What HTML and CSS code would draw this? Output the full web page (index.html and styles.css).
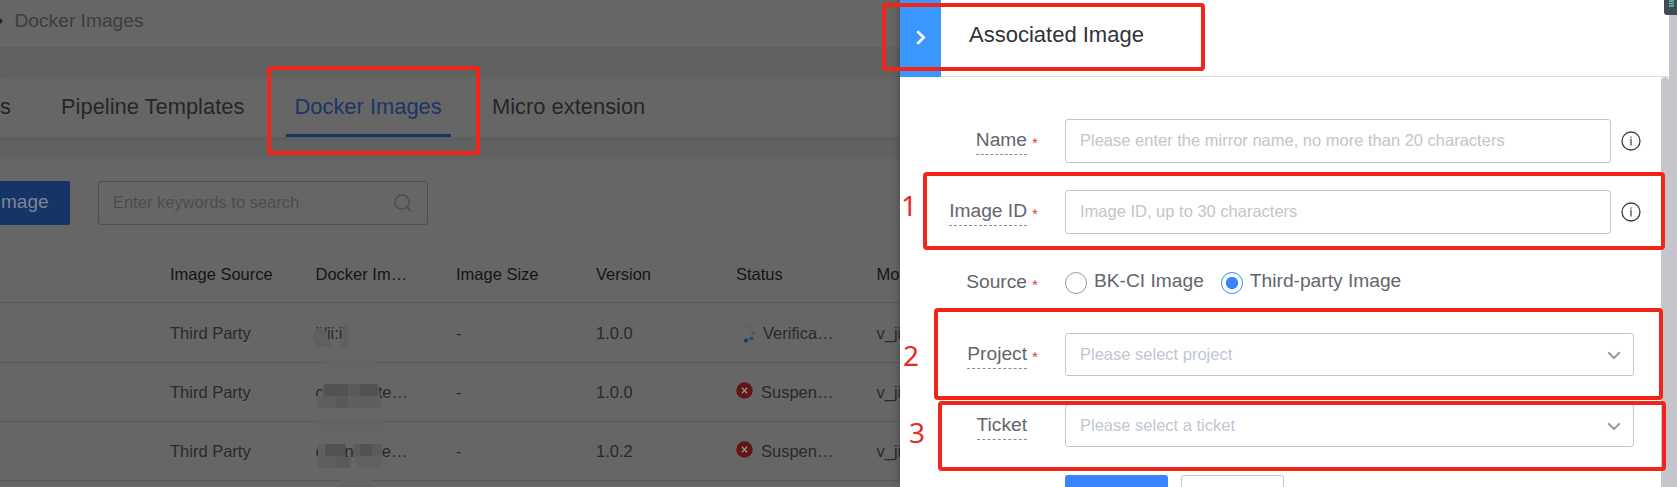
FILE: index.html
```html
<!DOCTYPE html>
<html lang="en">
<head>
<meta charset="utf-8">
<title>Docker Images</title>
<link rel="stylesheet" href="styles.css">
</head>
<body>
<svg width="0" height="0" class="defs" aria-hidden="true">
  <symbol id="info" viewBox="0 0 20 20"><circle cx="10" cy="10" r="9" fill="none" stroke="#3c3c3c" stroke-width="1.3"/><path d="M10 7.8V14.4M10 5.4V6.8" stroke="#3c3c3c" stroke-width="1.2"/></symbol>
  <symbol id="down" viewBox="0 0 14 9"><path d="M1.2 1.2L7 7L12.8 1.2" fill="none" stroke="#979ba5" stroke-width="2"/></symbol>
  <symbol id="fail" viewBox="0 0 17 17"><circle cx="8.5" cy="8.5" r="8.2" fill="#611616"/><path d="M5.9 5.7L11.1 11.3M11.1 5.7L5.9 11.3" stroke="#959090" stroke-width="1.3"/></symbol>
</svg>
<div class="app">
  <main class="page">
    <header class="crumbs"><svg class="crumb-dot" viewBox="0 0 3 6"><path d="M0 0L3 3L0 6Z" fill="#222"/></svg><span>Docker Images</span></header>
    <nav class="tabs">
      <span class="tab tab-cut">s</span>
      <span class="tab tab-pipeline">Pipeline Templates</span>
      <span class="tab tab-active">Docker Images</span>
      <span class="tab tab-micro">Micro extension</span>
    </nav>
    <section class="content">
      <div class="toolbar">
        <div class="add">mage</div>
        <div class="search"><span>Enter keywords to search</span>
          <svg viewBox="0 0 18 18"><circle cx="8" cy="8" r="7.1" fill="none" stroke="#4e4f51" stroke-width="1.5"/><path d="M13.2 13.2L17 17" stroke="#4e4f51" stroke-width="2"/></svg>
        </div>
      </div>
      <div class="table">
        <div class="row head"><i></i><span>Image Source</span><span>Docker Im…</span><span>Image Size</span><span>Version</span><span>Status</span><span>Mo</span></div>
        <div class="row"><i></i><span>Third Party</span><span class="masked">i'/ii:i'
            <svg class="mask" viewBox="0 0 80 60"><path d="M1 28L5 21L10 17L15 22L16 27L24 37H5Z" fill="#5f5f5f"/><path d="M29 37L33 15L37 13V37Z" fill="#606060"/><path d="M14 50H65V61H14Z" fill="#626564"/></svg></span><span>-</span><span>1.0.0</span>
          <span class="status"><svg class="spin" viewBox="0 0 20 20"><circle cx="10" cy="3" r="1.9" fill="#5c646e"/><circle cx="15" cy="5" r="1.9" fill="#556274"/><circle cx="17.3" cy="10" r="1.9" fill="#465c7d"/><circle cx="15.3" cy="15.4" r="1.9" fill="#2f4a76"/><circle cx="10" cy="17.6" r="2" fill="#173a70"/><circle cx="5" cy="5" r="1.7" fill="#626467"/><circle cx="3" cy="10" r="1.5" fill="#646566"/></svg>Verifica…</span><span>v_ji</span></div>
        <div class="row"><i></i><span>Third Party</span><span class="masked">c<b></b>te…
            <svg class="mask" viewBox="0 0 80 60"><path d="M12 14H67L69 26L70 38H6V26H11Z" fill="#5f5f5f"/><path d="M13 14H37V26H13ZM49 14H67V26H49Z" fill="#535353"/><path d="M37 14H49V26H37Z" fill="#5a5a5a"/><path d="M25 26H37V38H25Z" fill="#595959"/><path d="M6 50H71V61H6Z" fill="#626564"/></svg></span><span>-</span><span>1.0.0</span><span class="status"><svg class="fail"><use href="#fail"/></svg>Suspen…</span><span>v_ji</span></div>
        <div class="row"><i></i><span>Third Party</span><span class="masked">c<b class="wide"></b>e…
            <svg class="mask" viewBox="0 0 80 60"><path d="M7 15H35V27H40V39H7Z" fill="#5f5f5f"/><path d="M14 15H35V27H14ZM49 15H61V27H49Z" fill="#535353"/><path d="M42 15H49V27H42ZM61 15H71V27H61Z" fill="#5b5b5b"/><path d="M42 27H71L68 39H48Z" fill="#5f6261"/><path d="M25 27H38V39H25Z" fill="#5a5a5a"/><path d="M29 51H61V60H29Z" fill="#626564"/></svg><em>n</em></span><span>-</span><span>1.0.2</span><span class="status"><svg class="fail"><use href="#fail"/></svg>Suspen…</span><span>v_ji</span></div>
      </div>
    </section>
  </main>
  <aside class="panel">
    <header class="panel-head">
      <div class="close"><svg viewBox="0 0 10 15"><path d="M1.3 1.3L7.8 7.5L1.3 13.7" fill="none" stroke="#fff" stroke-width="2.6"/></svg></div>
      <h1>Associated Image</h1>
    </header>
    <form class="form">
      <div class="field"><label><u>Name</u><s>*</s></label><div class="box input">Please enter the mirror name, no more than 20 characters</div><svg class="info"><use href="#info"/></svg></div>
      <div class="field"><label><u>Image ID</u><s>*</s></label><div class="box input">Image ID, up to 30 characters</div><svg class="info"><use href="#info"/></svg></div>
      <div class="field"><label>Source<s>*</s></label><div class="radios"><i class="radio"></i><span class="first">BK-CI Image</span><i class="radio on"></i><span>Third-party Image</span></div></div>
      <div class="field"><label><u>Project</u><s>*</s></label><div class="box select"><span>Please select project</span><svg><use href="#down"/></svg></div></div>
      <div class="field"><label><u>Ticket</u><s></s></label><div class="box select"><span>Please select a ticket</span><svg><use href="#down"/></svg></div></div>
      <div class="actions"><div class="submit"></div><div class="cancel"></div></div>
    </form>
    <div class="inner-scroll"></div>
  </aside>
  <div class="outer-scroll"></div>
</div>
<div class="widget"><svg viewBox="0 0 14 15"><path d="M5 1H10M5 3.5H10M5 6H10" stroke="#55c5a2" stroke-width="1.5"/></svg></div>
<div class="mark mark-tab"></div>
<div class="mark mark-title"></div>
<div class="mark mark-id"></div>
<div class="mark mark-project"></div>
<div class="mark mark-ticket"></div>
<div class="num num-1">1</div>
<div class="num num-2">2</div>
<div class="num num-3">3</div>
</body>
</html>
```

FILE: styles.css
```css
* { box-sizing: border-box; }
body { margin: 0; width: 1677px; height: 487px; overflow: hidden; position: relative; font-family: "Liberation Sans", Arial, sans-serif; background: #666; }
.defs { position: absolute; }
.app { display: grid; grid-template-columns: 900px 769px 8px; height: 487px; }
.page { background: #5f6261; height: 487px; overflow: hidden; }
.crumbs { height: 48px; display: flex; align-items: center; background: #666; border-bottom: 1px solid #606060; font-size: 19.2px; line-height: 24px; color: #3d3d3d; padding-bottom: 6px; }
.crumb-dot { width: 3px; height: 6px; margin-right: 11.5px; }
.tabs { height: 60px; margin-top: 29px; display: flex; background: #666; font-size: 21.9px; line-height: 59px; color: #262626; box-shadow: 0 2px 3px #5b5d5c; }
.tab { height: 60px; white-space: nowrap; }
.tab-cut { width: 61px; }
.tab-pipeline { width: 225px; }
.tab-active { width: 165px; padding-left: 8.5px; color: #1c3566; border-bottom: 3px solid #173467; }
.tab-micro { margin-left: 41px; }
.content { margin-top: 22px; height: 329px; background: #666; padding-top: 22px; }
.toolbar { display: flex; height: 44px; }
.add { width: 70px; height: 44px; background: #173467; border-radius: 0 2px 2px 0; color: #7b8594; font-size: 19px; line-height: 42px; padding-left: 1px; }
.search { margin-left: 28px; width: 330px; height: 44px; border: 1px solid #4e4f51; border-radius: 3px; display: flex; justify-content: space-between; align-items: center; padding: 0 15px 2px 14px; font-size: 16.5px; color: #4c4d4f; }
.search svg { width: 18px; height: 18px; margin-top: 2px; }
.table { padding-top: 20px; font-size: 16.5px; color: #292a2c; }
.row { display: grid; grid-template-columns: 170px 145.5px 140.5px 140px 140px 140.5px 24px; height: 59px; line-height: 58px; border-bottom: 1px solid #595959; white-space: nowrap; }
.row.head { height: 58px; line-height: 59px; color: #151517; }
.row.head + .row { height: 60px; line-height: 60px; }
.masked { position: relative; }
.masked b { display: inline-block; width: 54px; }
.masked b.wide { width: 58px; }
.masked em { position: absolute; left: 29px; top: 0; font-style: normal; }
.mask { position: absolute; left: -5px; top: 7px; width: 80px; height: 60px; z-index: 1; }
.masked em { z-index: 2; }
.status { display: flex; align-items: center; }
.spin { width: 20px; height: 20px; margin-right: 7px; }
.fail { width: 17px; height: 17px; margin: 0 8px 3px 0; }
.panel { position: relative; background: #fff; height: 487px; box-shadow: 0 0 8px rgba(0,0,0,.35); }
.panel-head { display: flex; height: 77px; border-bottom: 1px solid #dcdee0; }
.close { width: 41px; height: 77px; background: #3a97ff; display: flex; align-items: center; justify-content: center; }
.close svg { width: 10px; height: 15px; margin: -3px 0 0 1px; }
h1 { margin: 0 0 0 28px; font-size: 22px; font-weight: 400; line-height: 70px; color: #303237; }
.form { padding-top: 42px; height: 410px; overflow: hidden; }
.field { display: flex; height: 44px; margin-bottom: 27.2px; }
label { width: 165px; display: flex; justify-content: flex-end; font-size: 19.2px; color: #63656e; line-height: 26px; padding-top: 8px; }
label u { text-decoration: none; height: 28px; border-bottom: 1px dashed #8b8d94; }
label s { text-decoration: none; color: #dc3f3c; font-size: 15px; width: 38px; padding: 3px 0 0 5px; }
.box { height: 44px; border: 1px solid #c3c5cb; border-radius: 3px; padding: 0 14px; font-size: 16.5px; line-height: 41px; color: #c3c5ca; white-space: nowrap; }
.input { width: 546px; }
.select { width: 569px; display: flex; justify-content: space-between; align-items: center; color: #c0c7d2; height: 43px; }
.select svg { width: 14px; height: 9px; margin-right: -2px; margin-top: 2px; }
.info { width: 20px; height: 20px; margin: 12px 0 0 10px; }
.radios { display: flex; font-size: 19.2px; color: #63656e; line-height: 40px; }
.radio { width: 22px; height: 22px; border: 1px solid #979ba5; border-radius: 50%; margin: 11px 7px 0 0; }
.first { margin-right: 17px; }
.radio.on { border-color: #3a84ff; background: radial-gradient(circle, #3a84ff 5.7px, #fff 6.5px); }
.actions { display: flex; gap: 13px; padding-left: 165px; }
.submit, .cancel { width: 103px; height: 44px; border-radius: 3px; background: #3a84ff; }
.cancel { background: #fff; border: 1px solid #c3c5cb; }
.inner-scroll { position: absolute; right: 0; top: 77px; width: 8px; height: 410px; border-radius: 4px 4px 0 0; background: #c4c6cc; }
.outer-scroll { background: #c4c6cc; position: relative; }
.widget { position: absolute; left: 1664px; top: 0; width: 14px; height: 15px; background: #424957; border-radius: 0 0 0 3px; }
.widget svg { display: block; width: 14px; height: 15px; }
.mark { position: absolute; border: 4px solid #f32518; border-radius: 4px; }
.mark-tab { left: 267px; top: 66px; width: 213px; height: 89px; }
.mark-title { left: 882px; top: 3px; width: 323px; height: 68px; }
.mark-id { left: 923px; top: 172px; width: 742px; height: 78px; }
.mark-project { left: 934px; top: 308px; width: 729px; height: 92px; }
.mark-ticket { left: 938px; top: 401px; width: 728px; height: 70px; }
.num { position: absolute; font-family: "Noto Sans", "Open Sans", sans-serif; font-size: 28px; line-height: 30px; color: #e52c22; }
.num-1 { left: 901px; top: 190px; }
.num-2 { left: 903px; top: 340px; }
.num-3 { left: 909px; top: 417px; }
```
